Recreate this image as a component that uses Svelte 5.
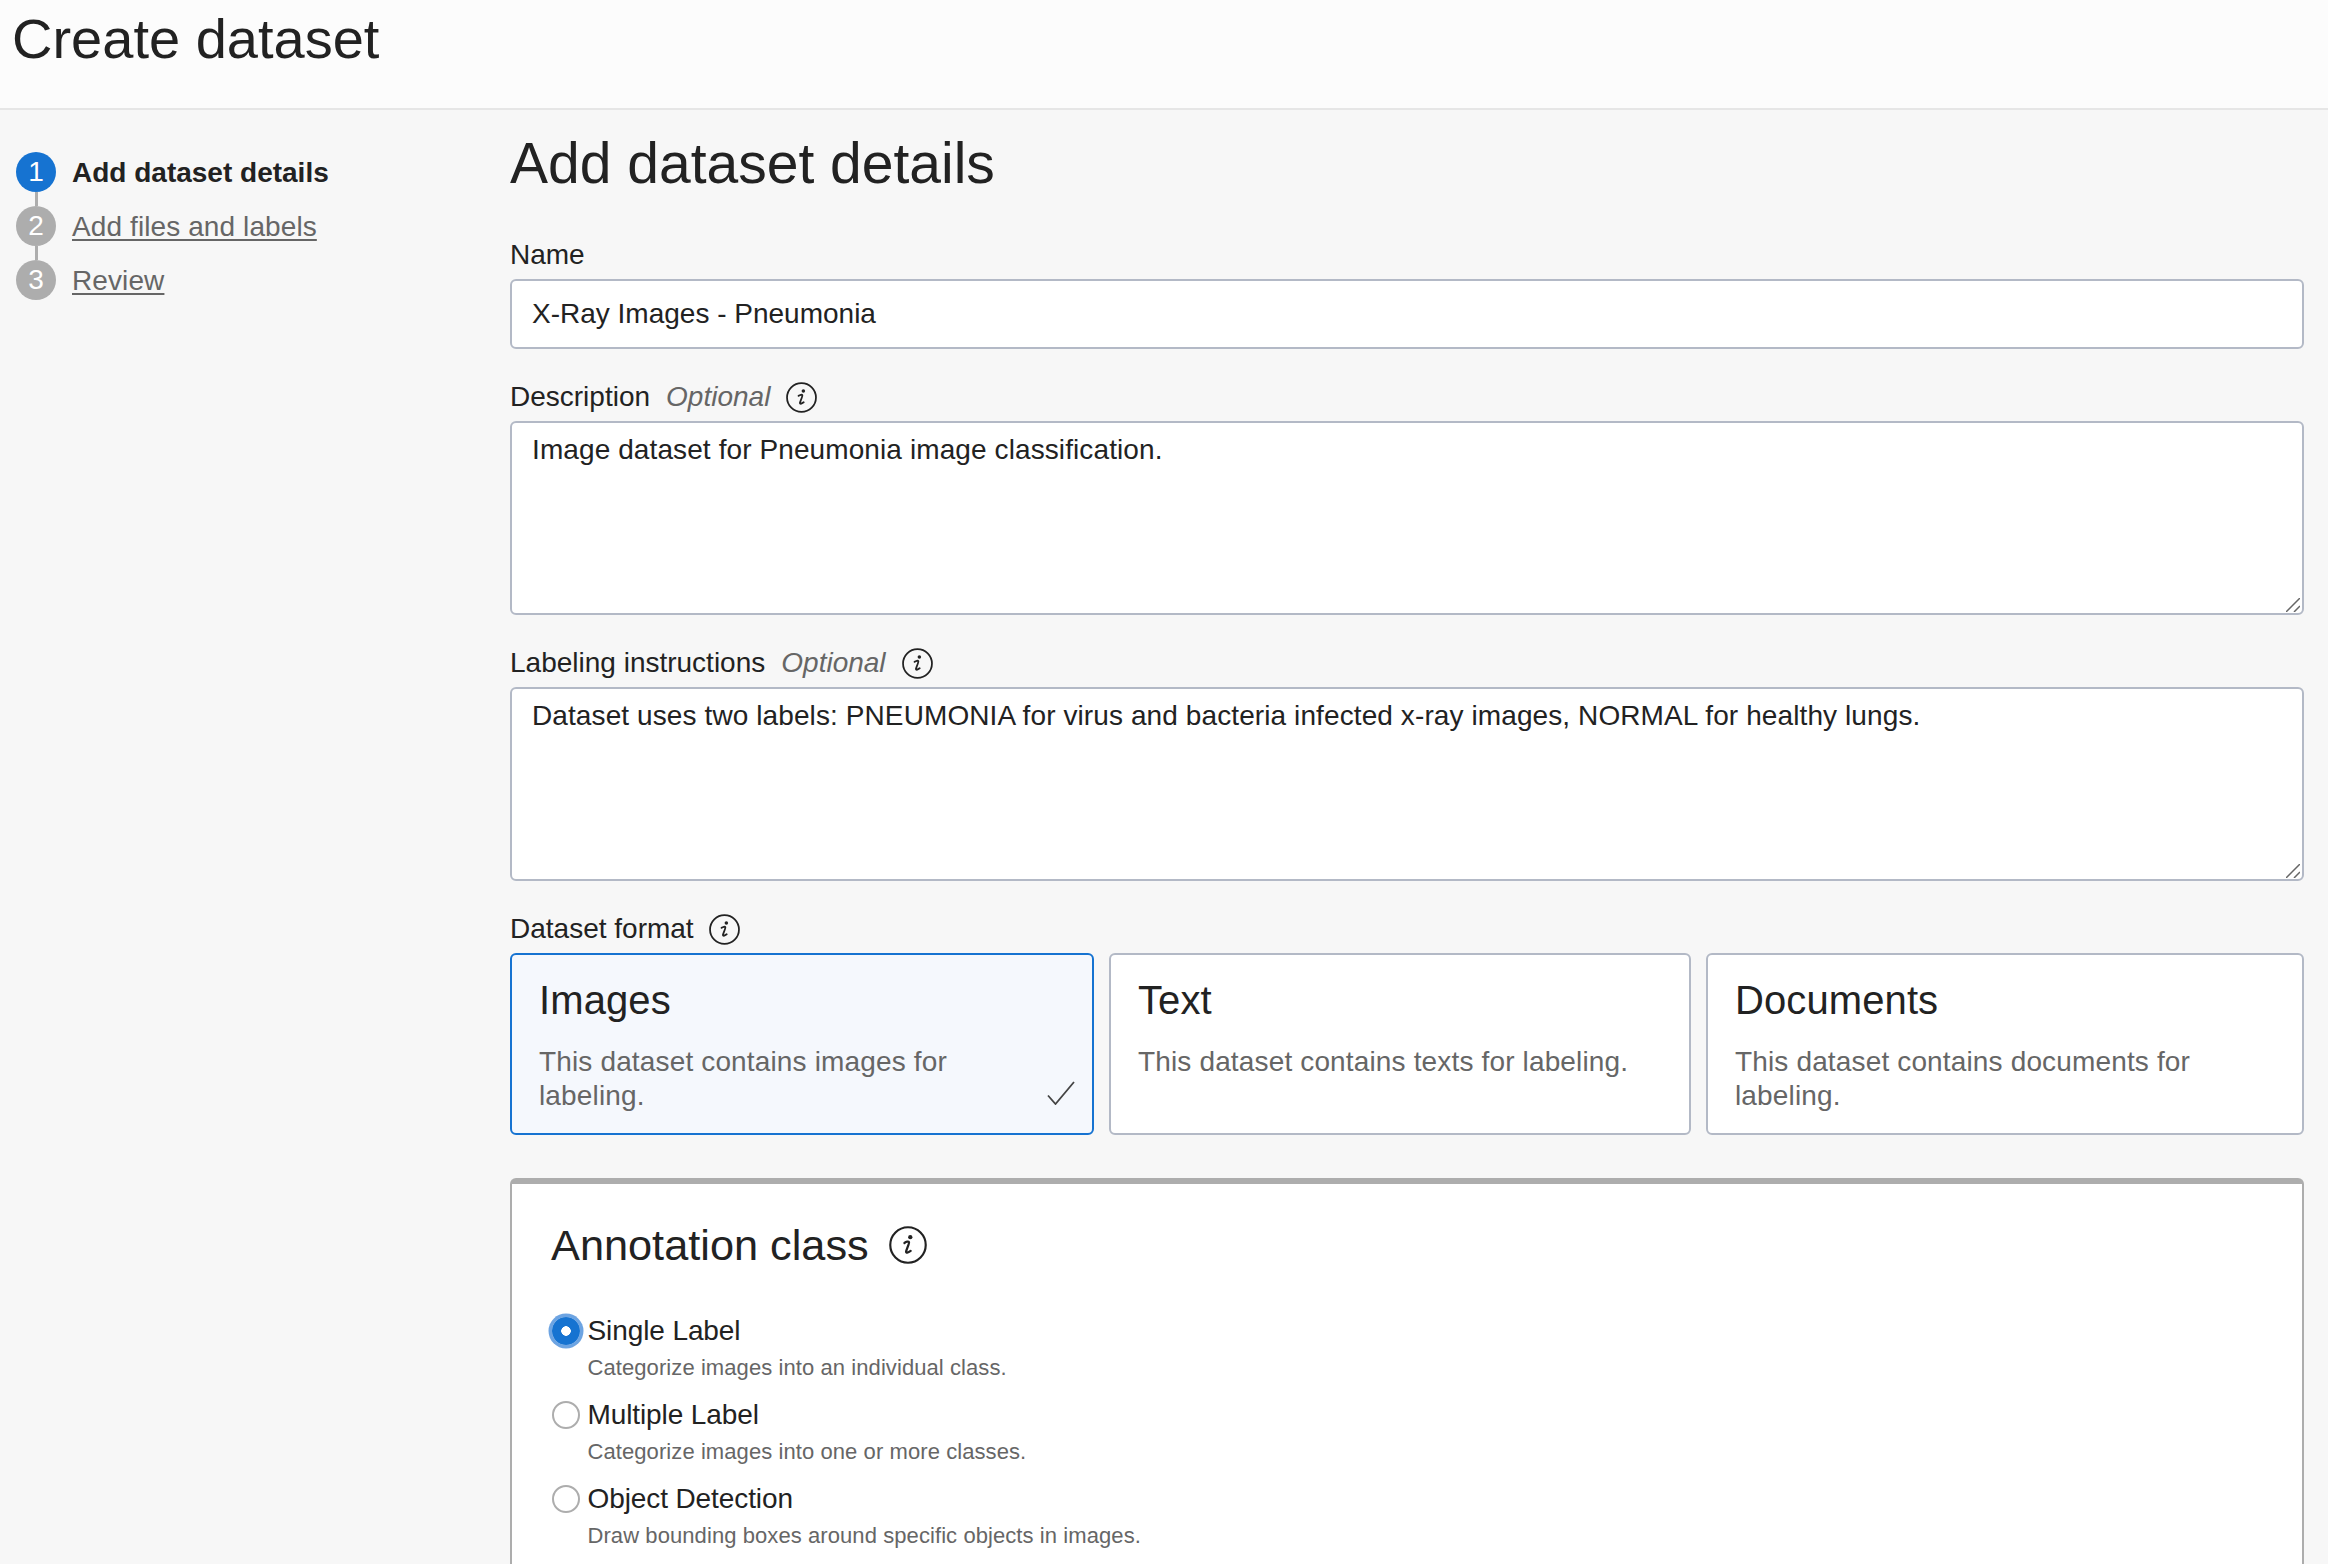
<script>
  const steps = [
    { n: 1, label: 'Add dataset details', active: true },
    { n: 2, label: 'Add files and labels', active: false },
    { n: 3, label: 'Review', active: false }
  ];
  const formats = [
    { title: 'Images', desc: 'This dataset contains images for labeling.', selected: true },
    { title: 'Text', desc: 'This dataset contains texts for labeling.', selected: false },
    { title: 'Documents', desc: 'This dataset contains documents for labeling.', selected: false }
  ];
  const classes = [
    { title: 'Single Label', desc: 'Categorize images into an individual class.', checked: true },
    { title: 'Multiple Label', desc: 'Categorize images into one or more classes.', checked: false },
    { title: 'Object Detection', desc: 'Draw bounding boxes around specific objects in images.', checked: false }
  ];
</script>

{#snippet info(cls)}
  <svg class={'info ' + cls} viewBox="0 0 30 30" aria-hidden="true">
    <circle cx="15" cy="15" r="14" fill="none" stroke="#222" stroke-width="1.7" />
    <circle cx="16.8" cy="8.8" r="1.7" fill="#222" />
    <path d="M12.2 13.4c1.4-1 3.2-1.4 3.6-.6.4.8-2.2 6.2-2.3 7.4-.1 1.1 1.4 1.2 3.6-.5" fill="none" stroke="#222" stroke-width="1.8" stroke-linecap="round" />
  </svg>
{/snippet}

{#snippet grip()}
  <svg class="grip" viewBox="0 0 14 14" aria-hidden="true">
    <path d="M0 14 L14 0 M8 14 L14 8" stroke="#666" stroke-width="1.5" fill="none" />
  </svg>
{/snippet}

<div class="page">
  <header class="top"><h1>Create dataset</h1></header>
  <div class="body">
    <nav class="steps">
      {#each steps as s, i}
        <div class="step">
          <span class="num" class:on={s.active}>{s.n}</span>
          {#if s.active}
            <strong>{s.label}</strong>
          {:else}
            <a href="#top" class="link">{s.label}</a>
          {/if}
          {#if i < steps.length - 1}<span class="line"></span>{/if}
        </div>
      {/each}
    </nav>
    <main class="main">
      <h2>Add dataset details</h2>

      <div class="field">
        <div class="label">Name</div>
        <input class="control single" type="text" value="X-Ray Images - Pneumonia" />
      </div>
      <div class="field">
        <div class="label">Description <em>Optional</em> {@render info('')}</div>
        <div class="area-wrap">
          <textarea class="control area" value="Image dataset for Pneumonia image classification."></textarea>
          {@render grip()}
        </div>
      </div>
      <div class="field">
        <div class="label">Labeling instructions <em>Optional</em> {@render info('')}</div>
        <div class="area-wrap">
          <textarea class="control area" value="Dataset uses two labels: PNEUMONIA for virus and bacteria infected x-ray images, NORMAL for healthy lungs."></textarea>
          {@render grip()}
        </div>
      </div>

      <div class="label">Dataset format {@render info('wide')}</div>
      <div class="cards">
        {#each formats as f}
          <div class="card" class:sel={f.selected}>
            <div class="card-title">{f.title}</div>
            <div class="card-desc">{f.desc}</div>
            {#if f.selected}
              <svg class="check" viewBox="0 0 28 24" aria-hidden="true">
                <path d="M1 14.5 L8.5 23 L27 1" fill="none" stroke="#444" stroke-width="1.8" />
              </svg>
            {/if}
          </div>
        {/each}
      </div>

      <section class="panel">
        <div class="panel-title">Annotation class {@render info('big')}</div>
        <div class="options">
          {#each classes as c}
            <div class="option">
              <span class="radio" class:checked={c.checked}></span>
              <div class="opt-title">{c.title}</div>
              <div class="opt-desc">{c.desc}</div>
            </div>
          {/each}
        </div>
      </section>
    </main>
  </div>
</div>

<style>
  :global(body) { margin: 0; background: #f7f7f7; }
  .page {
    height: 1564px;
    overflow: hidden;
    font-family: "Liberation Sans", Arial, sans-serif;
    font-size: 28px;
    letter-spacing: .1px;
    color: #222;
    background: #f7f7f7;
  }
  .top {
    height: 108px;
    background: #fcfcfc;
    border-bottom: 2px solid #e6e6e6;
    padding-left: 12px;
  }
  h1 { margin: 0; padding-top: 5px; font-size: 56px; line-height: 68px; font-weight: 400; letter-spacing: 0; }
  .body { display: flex; }
  .steps { width: 510px; flex: none; padding: 42px 0 0 16px; box-sizing: border-box; }
  .step { position: relative; display: flex; align-items: center; gap: 16px; height: 40px; margin-bottom: 14px; line-height: 43px; }
  .num {
    width: 40px; height: 40px; flex: none; border-radius: 50%;
    background: #adadad; color: #fff; text-align: center; line-height: 40px;
  }
  .num.on { background: #1673d1; }
  .line { position: absolute; left: 18.5px; top: 40px; width: 3px; height: 14px; background: #adadad; }
  .link { color: #666; text-decoration: underline; text-underline-offset: 3px; }
  strong { font-weight: 700; letter-spacing: 0; }
  .main { flex: 1; min-width: 0; padding: 19px 24px 0 0; }
  h2 { margin: 0 0 42px; font-size: 57px; line-height: 68px; font-weight: 400; letter-spacing: 0; }
  .field { margin-bottom: 32px; }
  .label { display: flex; align-items: center; height: 32px; line-height: 32px; margin-bottom: 8px; letter-spacing: 0; }
  .label em { color: #666; margin-left: 16px; }
  .info { width: 31px; height: 31px; margin-left: 16px; flex: none; }
  .info.wide { margin-left: 15px; }
  .info.big { width: 38px; height: 38px; margin-left: 20px; }
  .control {
    display: block; width: 100%; box-sizing: border-box;
    border: 2px solid #b3b9c6; border-radius: 6px; background: #fff;
    font-family: inherit; font-size: 28px; letter-spacing: .1px; color: #222; padding: 0 20px; outline: none; margin: 0;
  }
  .control.single { height: 70px; letter-spacing: 0; }
  .area-wrap { position: relative; }
  .area { height: 194px; padding-top: 10px; line-height: 34px; resize: none; }
  .grip { position: absolute; right: 4px; bottom: 3px; width: 14px; height: 14px; }
  .cards { display: grid; grid-template-columns: 584px 582px 1fr; gap: 15px; margin-bottom: 43px; }
  .card {
    position: relative; height: 182px; box-sizing: border-box;
    border: 2px solid #b3b9c6; border-radius: 6px; background: #fff;
    padding: 21px 40px 0 27px;
  }
  .card.sel { border-color: #1673d1; background: #f5f8fd; }
  .card-title { font-size: 40px; line-height: 48px; letter-spacing: .1px; }
  .card-desc { margin-top: 21px; line-height: 34px; color: #666; letter-spacing: .15px; }
  .check { position: absolute; right: 17px; bottom: 28px; width: 28px; height: 24px; }
  .panel {
    border: solid #adadad; border-width: 6px 2px 0 2px; border-radius: 6px 6px 0 0;
    background: #fff; padding: 36px 39px 120px;
  }
  .panel-title { display: flex; align-items: center; font-size: 43.3px; line-height: 50px; margin-bottom: 45px; letter-spacing: 0; }
  .option { display: grid; grid-template-columns: 29px 1fr; column-gap: 7.5px; margin-bottom: 17px; }
  .radio {
    width: 28px; height: 28px; box-sizing: border-box; align-self: center; margin-left: 1px;
    border: 2px solid #adadad; border-radius: 50%; background: #fff;
  }
  .radio.checked {
    border: 0; background: radial-gradient(circle, #fff 0 4.5px, #1673d1 5px);
    box-shadow: 0 0 0 3.5px #6da4e2;
  }
  .opt-title { line-height: 32px; letter-spacing: -.1px; }
  .opt-desc { grid-column: 2; margin-top: 7px; font-size: 22px; line-height: 28px; letter-spacing: .08px; color: #666; }
</style>
